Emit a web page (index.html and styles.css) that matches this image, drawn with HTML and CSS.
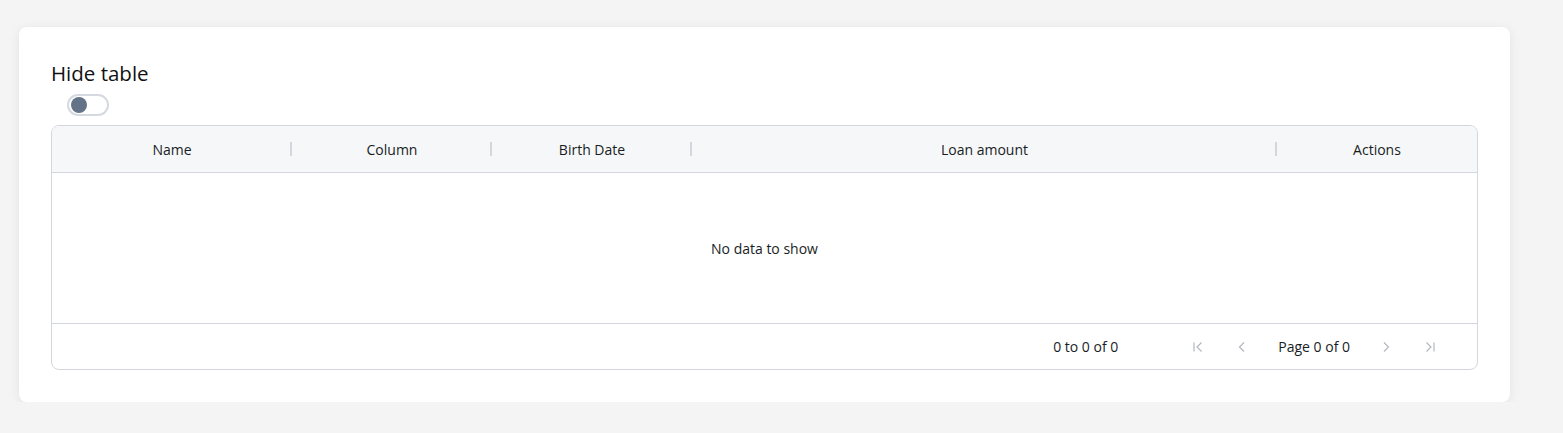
FILE: index.html
```html
<!DOCTYPE html>
<html lang="en">
<head>
  <meta charset="UTF-8">
  <title>Hide table</title>
  <link rel="stylesheet" href="styles.css">
</head>
<body>
  <div class="page">
    <div class="card">
      <h2 class="title">Hide table</h2>
      <label class="toggle"><span class="knob"></span></label>

      <div class="grid">
        <div class="grid-header">
          <div class="hcell sep">Name</div>
          <div class="hcell sep">Column</div>
          <div class="hcell sep">Birth Date</div>
          <div class="hcell sep">Loan amount</div>
          <div class="hcell">Actions</div>
        </div>
        <div class="grid-body">No data to show</div>
        <div class="grid-footer">
          <span class="summary">0 to 0 of 0</span>
          <span class="pager">
            <svg class="icon" viewBox="0 0 16 16"><path d="M4 3.5v9M11.5 3.5L7 8l4.5 4.5"/></svg>
            <svg class="icon" viewBox="0 0 16 16"><path d="M10 3.5L5.5 8l4.5 4.5"/></svg>
            <span class="page-text">Page 0 of 0</span>
            <svg class="icon" viewBox="0 0 16 16"><path d="M6 3.5L10.5 8L6 12.5"/></svg>
            <svg class="icon" viewBox="0 0 16 16"><path d="M4.5 3.5L9 8l-4.5 4.5M12 3.5v9"/></svg>
          </span>
        </div>
      </div>
    </div>
  </div>
</body>
</html>
```

FILE: styles.css
```css
html, body {
  margin: 0;
  background: #f4f4f4;
  font-family: 'Open Sans', 'Noto Sans', sans-serif;
  color: #181d1f;
}

.page {
  padding: 27px 53px 0 19px;
}

.card {
  background: #fff;
  border-radius: 8px;
  box-shadow: 0 2px 12px rgba(0,0,0,0.07);
  padding: 32px 32px 32px;
}

.title {
  margin: 0;
  font-size: 20.5px;
  font-weight: 400;
  line-height: 28px;
  color: #111;
}

.toggle {
  display: flex;
  align-items: center;
  box-sizing: border-box;
  width: 42px;
  height: 22px;
  margin: 7px 0 9px 16px;
  padding: 0 2px;
  border: 2px solid #d5d9e0;
  border-radius: 11px;
}

.knob {
  width: 16px;
  height: 16px;
  border-radius: 50%;
  background: #637388;
}

.grid {
  border: 1px solid #d3d6dd;
  border-radius: 8px;
  overflow: hidden;
  font-size: 14px;
}

.grid-header {
  display: grid;
  grid-template-columns: 240px 200px 200px 1fr 200px;
  height: 46px;
  background: #f6f7f9;
  border-bottom: 1px solid #d3d6dd;
}

.hcell {
  display: flex;
  align-items: center;
  justify-content: center;
  position: relative;
}

.hcell.sep::after {
  content: "";
  position: absolute;
  right: 0;
  top: 16px;
  width: 2px;
  height: 14px;
  background: #d3d6dd;
}

.grid-body {
  height: 150px;
  display: flex;
  align-items: center;
  justify-content: center;
  border-bottom: 1px solid #d3d6dd;
}

.grid-footer {
  height: 45px;
  display: flex;
  align-items: center;
  justify-content: flex-end;
  padding-right: 39px;
}

.summary {
  margin-right: 72px;
}

.pager {
  display: flex;
  align-items: center;
  gap: 28px;
}

.icon {
  width: 16px;
  height: 16px;
  fill: none;
  stroke: #b4b8bf;
  stroke-width: 1.2;
}
```
